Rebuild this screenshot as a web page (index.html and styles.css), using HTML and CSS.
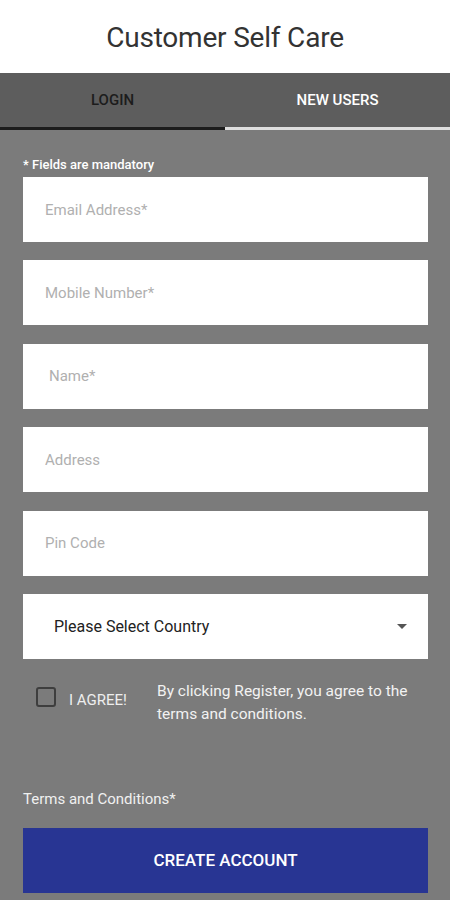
FILE: index.html
```html
<!DOCTYPE html>
<html lang="en">
<head>
  <meta charset="UTF-8">
  <title>Customer Self Care</title>
  <link rel="stylesheet" href="styles.css">
</head>
<body>
  <header class="title">Customer Self Care</header>

  <nav class="tabs">
    <div class="tab active">LOGIN</div>
    <div class="tab">NEW USERS</div>
  </nav>

  <form class="form" id="registerForm">
    <div class="note">* Fields are mandatory</div>
    <input class="field" type="email" placeholder="Email Address*">
    <input class="field" type="tel" placeholder="Mobile Number*">
    <input class="field name" type="text" placeholder="Name*">
    <input class="field" type="text" placeholder="Address">
    <input class="field" type="text" placeholder="Pin Code">

    <div class="select">
      <span>Please Select Country</span>
      <svg class="arrow" width="10" height="5" viewBox="0 0 10 5"><path d="M0 0h10L5 5z" fill="#555"/></svg>
    </div>

    <div class="agree">
      <label class="check">
        <span class="box"></span>
        <span>I AGREE!</span>
      </label>
      <p class="agree-text">By clicking Register, you agree to the terms and conditions.</p>
    </div>

    <div class="terms">Terms and Conditions*</div>
    <button type="submit" class="create">CREATE ACCOUNT</button>
  </form>
</body>
</html>
```

FILE: styles.css
```css
body {
  margin: 0;
  font-family: Roboto, "Liberation Sans", sans-serif;
  background: #7b7b7b;
}

.title {
  height: 73px;
  background: white;
  display: flex;
  justify-content: center;
  align-items: center;
  font-size: 28px;
  letter-spacing: -0.2px;
  color: #333;
  padding-top: 2px;
  box-sizing: border-box;
}

.tabs {
  display: grid;
  grid-template-columns: 1fr 1fr;
  background: #5d5d5d;
}

.tab {
  height: 54px;
  display: flex;
  justify-content: center;
  align-items: center;
  font-size: 15px;
  font-weight: 500;
  color: white;
  border-bottom: 3px solid #dedede;
}

.tab.active {
  color: #1c1c1c;
  border-bottom-color: #1c1c1c;
}

.form {
  padding: 26px 22px 20px 23px;
  display: flex;
  flex-direction: column;
}

.note {
  font-size: 13px;
  font-weight: 500;
  line-height: 18px;
  color: white;
  margin-bottom: 3px;
}

.field {
  height: 65px;
  border: none;
  margin: 0 0 18.4px;
  padding: 0 22px;
  font-family: inherit;
  font-size: 15px;
  color: #333;
  background: white;
}

.field.name {
  padding-left: 26px;
}

.field::placeholder {
  color: #b0b0b0;
}

.select {
  height: 65px;
  background: white;
  display: flex;
  align-items: center;
  justify-content: space-between;
  padding: 0 21px 0 31px;
  font-size: 16px;
  color: #222;
}

.agree {
  display: flex;
  align-items: flex-start;
  margin-top: 21px;
}

.check {
  display: flex;
  align-items: center;
  gap: 13px;
  width: 134px;
  padding: 5px 0 0 13px;
  box-sizing: border-box;
  font-size: 15px;
  color: #eee;
}

.box {
  width: 16px;
  height: 16px;
  border: 2px solid #3e3e3e;
  border-radius: 3px;
}

.check span:last-child {
  margin-top: 6px;
}

.agree-text {
  margin: 0;
  font-size: 15.5px;
  line-height: 23px;
  color: #f2f2f2;
  max-width: 262px;
}

.terms {
  margin-top: 64px;
  font-size: 15px;
  color: #f0f0f0;
}

.create {
  margin-top: 20px;
  height: 65px;
  background: #283593;
  color: white;
  border: none;
  font-family: inherit;
  font-size: 17px;
  font-weight: 500;
  cursor: pointer;
}
```
